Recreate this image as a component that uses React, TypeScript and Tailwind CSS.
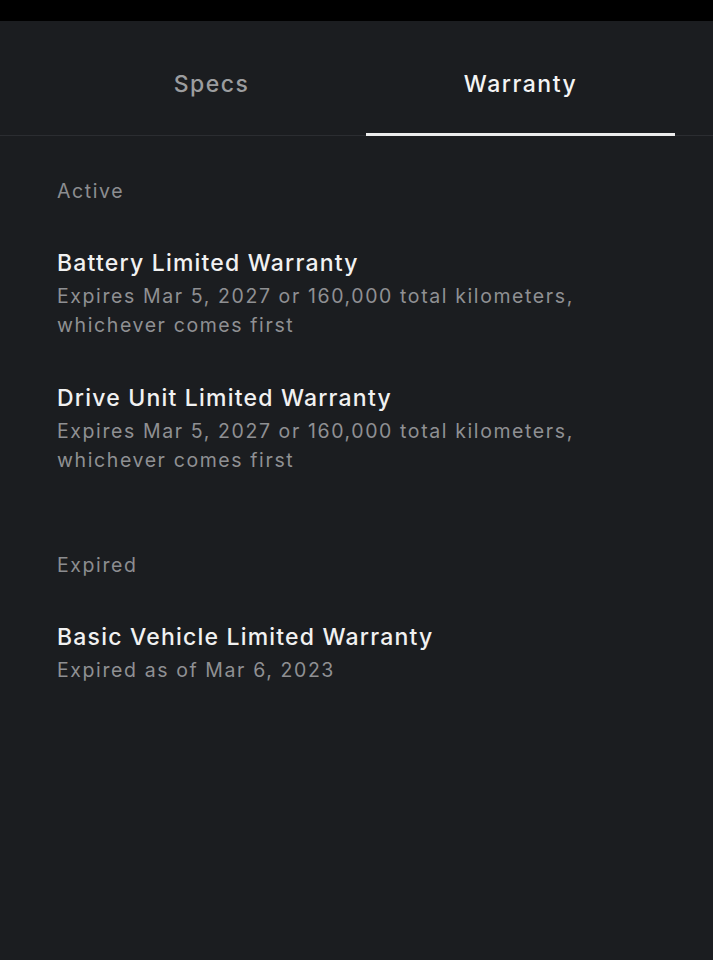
import React from 'react'

type Warranty = {
  title: string
  detail: string
}

const active: Warranty[] = [
  {
    title: 'Battery Limited Warranty',
    detail: 'Expires Mar 5, 2027 or 160,000 total kilometers, whichever comes first',
  },
  {
    title: 'Drive Unit Limited Warranty',
    detail: 'Expires Mar 5, 2027 or 160,000 total kilometers, whichever comes first',
  },
]

const expired: Warranty[] = [
  { title: 'Basic Vehicle Limited Warranty', detail: 'Expired as of Mar 6, 2023' },
]

function WarrantyItem({ item }: { item: Warranty }) {
  return (
    <div className="mt-[43px]">
      <h3 className="text-[23px] leading-[30px] font-medium tracking-[1.2px] text-[#f1f1f1]">{item.title}</h3>
      <p className="mt-[4px] w-[540px] text-[19.5px] leading-[29px] tracking-[1.6px] text-[#8f9093]">{item.detail}</p>
    </div>
  )
}

export default function App() {
  return (
    <div
      className="min-h-screen bg-[#1b1d20]"
      style={{ fontFamily: 'Inter, "Noto Sans", sans-serif' }}
    >
      <div className="h-[21px] bg-black" />

      {/* Tabs */}
      <div className="border-b border-[#2b2d31]">
        <div className="ml-[57px] mr-[38px] flex">
          <button className="flex-1 h-[114px] pt-[47px] flex justify-center items-start">
            <span className="text-[23px] leading-[32px] font-medium tracking-[1.5px] text-[#9c9d9f]">Specs</span>
          </button>
          <button className="relative flex-1 h-[114px] pt-[47px] flex justify-center items-start">
            <span className="text-[23px] leading-[32px] font-medium tracking-[1.5px] text-[#f4f4f4]">Warranty</span>
            <span className="absolute left-0 right-0 bottom-[-1px] h-[3px] bg-[#ececec]" />
          </button>
        </div>
      </div>

      {/* Content */}
      <div className="px-[57px]">
        <div className="mt-[41px] text-[19.5px] leading-[28px] tracking-[1.6px] text-[#8c8d90]">Active</div>
        {active.map(item => (
          <WarrantyItem key={item.title} item={item} />
        ))}

        <div className="mt-[76px] text-[19.5px] leading-[28px] tracking-[1.6px] text-[#8c8d90]">Expired</div>
        {expired.map(item => (
          <WarrantyItem key={item.title} item={item} />
        ))}
      </div>
    </div>
  )
}
